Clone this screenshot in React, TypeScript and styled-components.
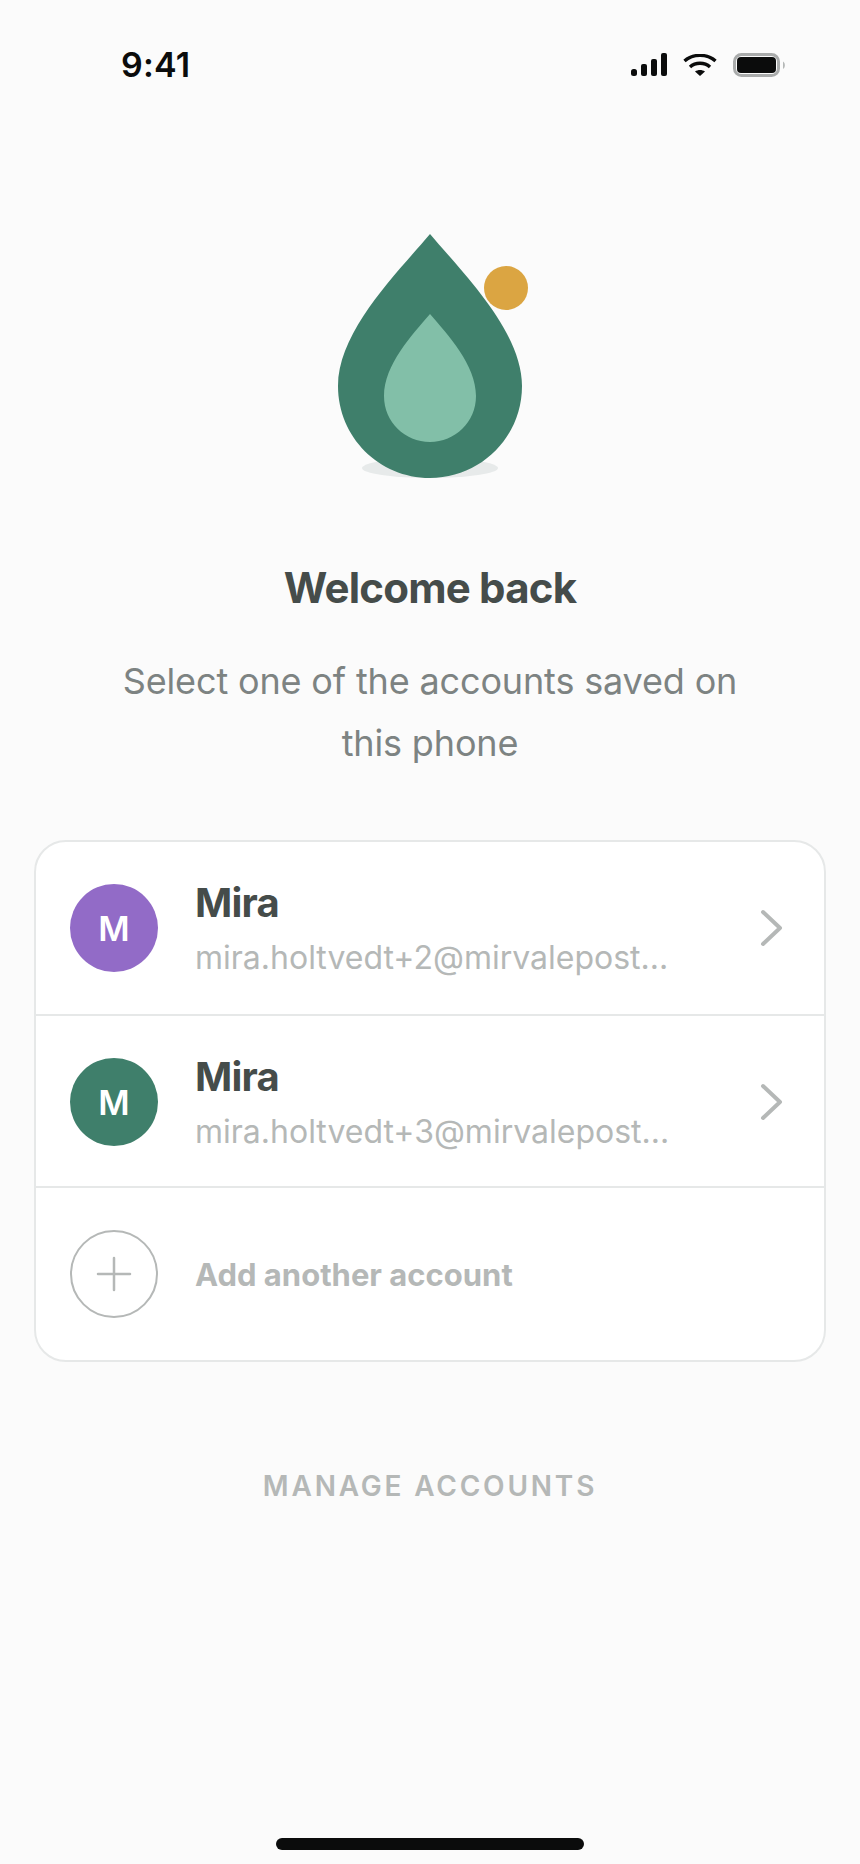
import * as React from 'react'
import styled, { createGlobalStyle } from 'styled-components'

const Global = createGlobalStyle`
  html, body {
    margin: 0;
    padding: 0;
    background: #fbfbfb;
  }
`

const Page = styled.div`
  width: 860px;
  height: 1864px;
  box-sizing: border-box;
  display: flex;
  flex-direction: column;
  align-items: center;
  background: #fbfbfb;
  font-family: Inter, 'Liberation Sans', sans-serif;
  overflow: hidden;
`

const StatusBar = styled.div`
  width: 100%;
  height: 128px;
  box-sizing: border-box;
  padding: 1px 74px 0 121px;
  display: flex;
  align-items: center;
  justify-content: space-between;
`

const Time = styled.div`
  font-weight: 600;
  font-size: 34px;
  letter-spacing: 0.2px;
  color: #0b0c0c;
`

const StatusIcons = styled.div`
  display: flex;
  align-items: center;
  gap: 16px;
`

const Logo = styled.svg`
  width: 200px;
  height: 260px;
  margin-top: 97px;
  display: block;
`

const Title = styled.h1`
  margin: 75px 0 0;
  font-size: 42px;
  line-height: 56px;
  font-weight: 700;
  letter-spacing: -0.8px;
  color: #454c4a;
`

const Subtitle = styled.p`
  margin: 34px 0 0;
  width: 640px;
  text-align: center;
  font-size: 36px;
  line-height: 62px;
  font-weight: 400;
  letter-spacing: -0.15px;
  color: #7d8382;
`

const Card = styled.div`
  margin-top: 66px;
  width: 792px;
  box-sizing: border-box;
  background: #fff;
  border: 2px solid #e6e8e8;
  border-radius: 32px;
`

const Row = styled.div<{ $last?: boolean; $height: number; $nudge?: number }>`
  height: ${p => p.$height}px;
  box-sizing: border-box;
  padding: ${p => p.$nudge ?? 0}px 40px 0 34px;
  display: flex;
  align-items: center;
  border-bottom: ${p => (p.$last ? 'none' : '2px solid #e6e8e8')};
`

const Avatar = styled.div<{ $color: string }>`
  width: 88px;
  height: 88px;
  flex: none;
  border-radius: 50%;
  background: ${p => p.$color};
  color: #fff;
  font-size: 34px;
  font-weight: 600;
  display: flex;
  align-items: center;
  justify-content: center;
`

const AddCircle = styled.div`
  width: 88px;
  height: 88px;
  flex: none;
  box-sizing: border-box;
  border-radius: 50%;
  border: 2px solid #b5b8b7;
  display: flex;
  align-items: center;
  justify-content: center;
`

const Info = styled.div`
  flex: 1;
  min-width: 0;
  margin-left: 37px;
`

const Name = styled.div`
  font-size: 40px;
  line-height: 50px;
  font-weight: 700;
  letter-spacing: -0.8px;
  color: #454c4a;
`

const Email = styled.div`
  margin-top: 10px;
  font-size: 32px;
  line-height: 40px;
  color: #b5b8b7;
  white-space: nowrap;
`

const AddLabel = styled.div`
  margin-left: 37px;
  font-size: 31px;
  font-weight: 700;
  color: #b5b8b7;
`

const Manage = styled.div`
  margin-top: 102px;
  font-size: 28px;
  line-height: 44px;
  font-weight: 600;
  letter-spacing: 2.8px;
  color: #b5b8b7;
`

const HomeIndicator = styled.div`
  margin-top: auto;
  margin-bottom: 14px;
  width: 308px;
  height: 12px;
  border-radius: 6px;
  background: #0b0c0c;
`

const Chevron = () => (
  <svg width="24" height="38" viewBox="0 0 24 38" fill="none">
    <path d="M3 3 L20 19 L3 35" stroke="#b5b8b7" strokeWidth="4" strokeLinecap="round" strokeLinejoin="round" />
  </svg>
)

const accounts = [
  { color: '#926bc7', email: 'mira.holtvedt+2@mirvalepost...', height: 174, nudge: 0 },
  { color: '#3f7f6b', email: 'mira.holtvedt+3@mirvalepost...', height: 172, nudge: 2 },
]

export default function App() {
  return (
    <Page>
      <Global />
      <StatusBar>
        <Time>9:41</Time>
        <StatusIcons>
          <svg width="36" height="23" viewBox="0 0 36 23" fill="#0b0c0c">
            <rect x="0" y="16" width="6" height="7" rx="2.5" />
            <rect x="10" y="11" width="6" height="12" rx="2" />
            <rect x="20" y="6" width="6" height="17" rx="2" />
            <rect x="30" y="0" width="6" height="23" rx="2" />
          </svg>
          <svg width="34" height="22" viewBox="0 0 34 22" fill="none" stroke="#0b0c0c" strokeWidth="3.4">
            <path d="M1.5 7 C10 -0.5 24 -0.5 32.5 7" />
            <path d="M7 13 C12.5 8 21.5 8 27 13" />
            <path d="M12 17.5 L17 22 L22 17.5 C19 15.5 15 15.5 12 17.5 Z" fill="#0b0c0c" stroke="none" />
          </svg>
          <svg width="53" height="24" viewBox="0 0 53 24" fill="none">
            <rect x="1.5" y="1.5" width="44" height="21" rx="7" stroke="#a9abab" strokeWidth="3" />
            <rect x="4" y="4" width="39" height="16" rx="4" fill="#0b0c0c" />
            <path d="M50 8.5 C52.5 10 52.5 14.5 50 16 Z" fill="#b5b8b7" />
          </svg>
        </StatusIcons>
      </StatusBar>

      <Logo viewBox="0 0 200 260">
        <ellipse cx="100" cy="243" rx="68" ry="10" fill="#e7eaea" />
        <path d="M100 9 C70 45 8 105 8 161 C8 212 49 253 100 253 C151 253 192 212 192 161 C192 105 130 45 100 9 Z" fill="#3f7f6b" />
        <path d="M100 89 C82 110 54 140 54 171 C54 197 75 217 100 217 C125 217 146 197 146 171 C146 140 118 110 100 89 Z" fill="#82bfa8" />
        <circle cx="176" cy="63" r="22" fill="#dba542" />
      </Logo>

      <Title>Welcome back</Title>
      <Subtitle>Select one of the accounts saved on this phone</Subtitle>

      <Card>
        {accounts.map(a => (
          <Row key={a.email} $height={a.height} $nudge={a.nudge}>
            <Avatar $color={a.color}>M</Avatar>
            <Info>
              <Name>Mira</Name>
              <Email>{a.email}</Email>
            </Info>
            <Chevron />
          </Row>
        ))}
        <Row $last $height={172}>
          <AddCircle>
            <svg width="36" height="36" viewBox="0 0 36 36" fill="none" stroke="#b5b8b7" strokeWidth="2.5" strokeLinecap="round">
              <path d="M18 2 V34 M2 18 H34" />
            </svg>
          </AddCircle>
          <AddLabel>Add another account</AddLabel>
        </Row>
      </Card>

      <Manage>MANAGE ACCOUNTS</Manage>
      <HomeIndicator />
    </Page>
  )
}
